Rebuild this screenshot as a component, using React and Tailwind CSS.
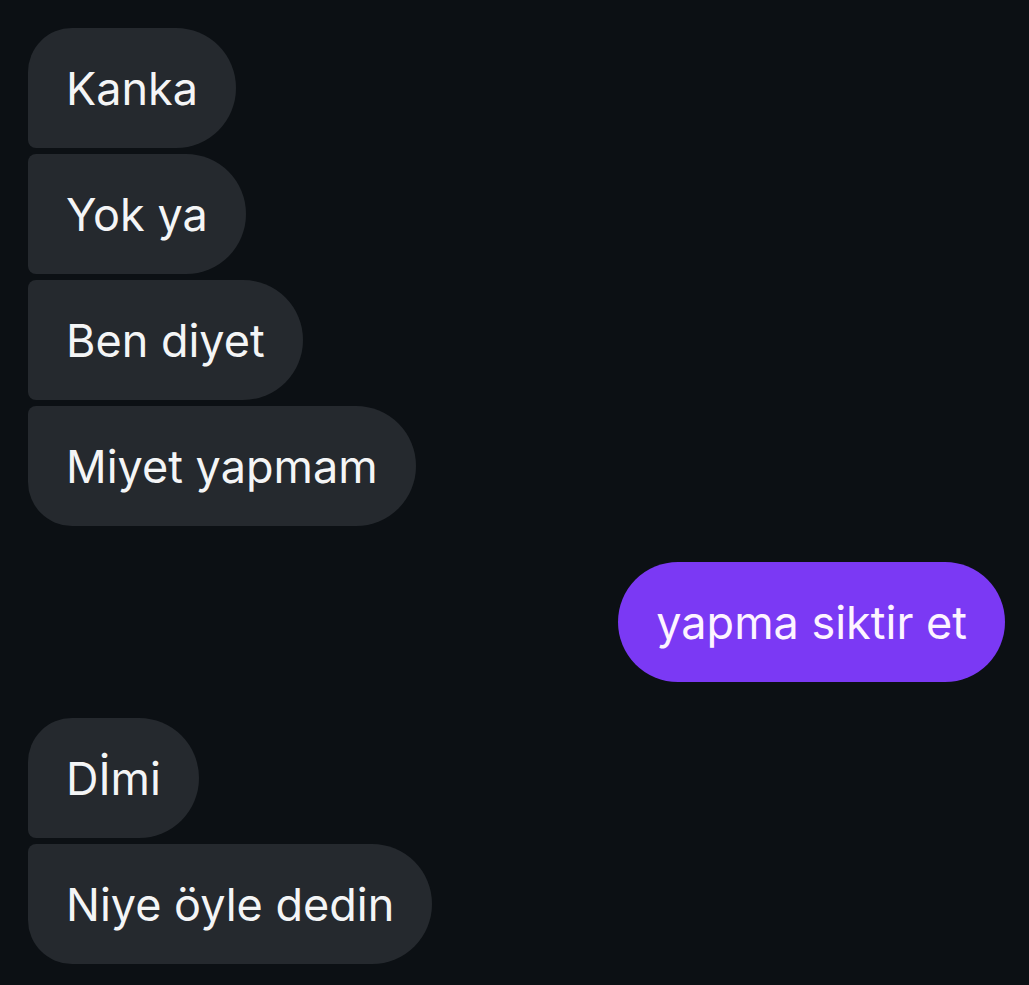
const received = 'bg-[#25292e] text-[#f4f5f6]';

function Bubble({ text, corners, mine }) {
  return (
    <div
      className={`h-[120px] flex items-center px-[38px] text-[45px] leading-none ${
        mine ? 'bg-[#7b39f4] text-[#fdf4ff] rounded-[60px]' : `${received} ${corners}`
      }`}
    >
      {text}
    </div>
  );
}

export default function App() {
  return (
    <div
      className="min-h-[985px] w-full bg-[#0c1014] pt-[28px] pl-[28px] pr-[24px] flex flex-col"
      style={{ fontFamily: 'Inter, "Noto Sans", sans-serif' }}
    >
      <div className="flex flex-col items-start gap-[6px]">
        <Bubble text="Kanka" corners="rounded-r-[60px] rounded-tl-[44px] rounded-bl-[8px]" />
        <Bubble text="Yok ya" corners="rounded-r-[60px] rounded-l-[8px]" />
        <Bubble text="Ben diyet" corners="rounded-r-[60px] rounded-l-[8px]" />
        <Bubble text="Miyet yapmam" corners="rounded-r-[60px] rounded-tl-[8px] rounded-bl-[44px]" />
      </div>
      <div className="flex justify-end mt-[36px]">
        <Bubble text="yapma siktir et" mine />
      </div>
      <div className="flex flex-col items-start gap-[6px] mt-[36px]">
        <Bubble text="Dİmi" corners="rounded-r-[60px] rounded-tl-[44px] rounded-bl-[8px]" />
        <Bubble text="Niye öyle dedin" corners="rounded-r-[60px] rounded-tl-[8px] rounded-bl-[44px]" />
      </div>
    </div>
  );
}
